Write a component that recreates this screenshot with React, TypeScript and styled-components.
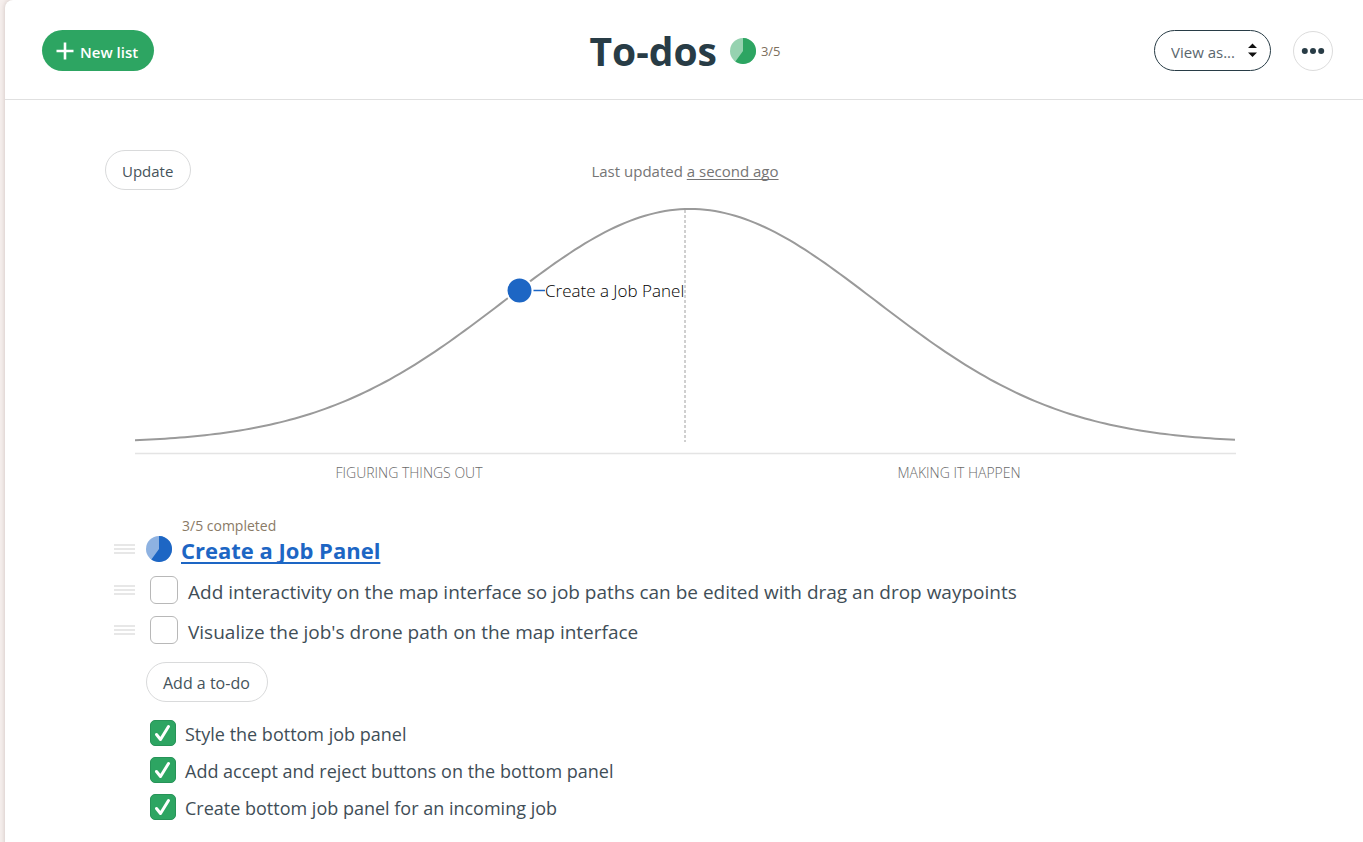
import React from "react";
import styled, { createGlobalStyle } from "styled-components";

const GlobalStyle = createGlobalStyle`
  * { box-sizing: border-box; }
  body {
    margin: 0;
    background: #f6efed;
    color: #283c46;
    font-family: "Open Sans", "Noto Sans", sans-serif;
    font-size: 15px;
  }
  button, select, input { font: inherit; color: inherit; margin: 0; }
`;

const Sheet = styled.div`
  min-height: 100vh;
  margin-left: 5px;
  background: #fff;
  border-top-left-radius: 8px;
  box-shadow: 0 0 5px rgba(90, 60, 50, 0.25);
`;

const Header = styled.header`
  display: grid;
  grid-template-columns: 1fr auto 1fr;
  align-items: center;
  height: 100px;
  padding: 2px 30px 0 32px;
  border-bottom: 1px solid #e0e0e0;
`;

const PrimaryButton = styled.button`
  display: flex;
  align-items: center;
  justify-self: start;
  gap: 6px;
  height: 41px;
  margin-left: 5px;
  padding: 2px 16px 0 14px;
  border: 0;
  border-radius: 21px;
  background: #2da562;
  color: #fff;
  font-weight: 600;
  cursor: pointer;

  svg { margin-top: -2px; }
`;

const TitleGroup = styled.div`
  display: flex;
  align-items: center;
  gap: 13px;
`;

const Title = styled.h1`
  margin: 0;
  font-size: 39px;
  line-height: 52px;
  font-weight: 700;
`;

const Progress = styled.span`
  display: flex;
  align-items: center;
  gap: 5px;
  color: #7d6f5c;
  font-size: 13px;
`;

const Actions = styled.div`
  display: flex;
  align-items: center;
  justify-self: end;
  gap: 22px;
`;

const SelectBox = styled.div`
  position: relative;

  svg {
    position: absolute;
    right: 13px;
    top: 13px;
    pointer-events: none;
  }
`;

const Select = styled.select`
  appearance: none;
  display: block;
  width: 117px;
  height: 41px;
  padding: 2px 32px 0 16px;
  border: 1px solid #283c46;
  border-radius: 21px;
  background: #fff;
  color: #5a666d;
  cursor: pointer;
`;

const MenuButton = styled.button`
  display: grid;
  place-items: center;
  width: 40px;
  height: 40px;
  padding: 0;
  border: 1px solid #dcdcdc;
  border-radius: 50%;
  background: #fff;
  cursor: pointer;
`;

const Main = styled.main`
  padding: 50px 98px 20px 100px;
`;

const ChartHeader = styled.div`
  display: grid;
  grid-template-columns: 1fr auto 1fr;
  align-items: center;
`;

const PillButton = styled.button<{ $large?: boolean }>`
  justify-self: start;
  height: 40px;
  padding: 2px 17px 0 16px;
  border: 1px solid #d9dadb;
  border-radius: 20px;
  background: #fff;
  color: #45535b;
  font-size: ${(p) => (p.$large ? 16 : 15)}px;
  cursor: pointer;
`;

const Updated = styled.p`
  margin: 0;
  padding-top: 2px;
  color: #757575;

  a {
    color: inherit;
    text-underline-offset: 2px;
    text-decoration-skip-ink: none;
  }
`;

const Chart = styled.svg`
  display: block;
  width: calc(100% - 59px);
  margin-left: 30px;
`;

const List = styled.section`
  padding: 26px 0 0 9px;
`;

const Completed = styled.p`
  margin: 0 0 0 68px;
  color: #8a7a66;
  font-size: 14px;
  line-height: 20px;
`;

const ListHeading = styled.div`
  display: flex;
  align-items: center;
  gap: 11px;
  height: 26px;
`;

const ListTitle = styled.h2`
  margin: 0 0 0 -2px;
  padding-top: 2px;
  font-size: 22px;
  line-height: 28px;
  font-weight: 700;

  a {
    color: #1d66c4;
    text-decoration-thickness: 2px;
    text-underline-offset: 3px;
    text-decoration-skip-ink: none;
  }
`;

const Items = styled.ul<{ $done?: boolean }>`
  margin: ${(p) => (p.$done ? "12px 0 0 36px" : "8px 0 0")};
  padding: 0;
  list-style: none;
`;

const Item = styled.li<{ $done?: boolean }>`
  display: flex;
  align-items: center;
  gap: 15px;
  height: ${(p) => (p.$done ? 37 : 40)}px;
`;

const ItemLabel = styled.label<{ $done?: boolean }>`
  display: flex;
  align-items: center;
  gap: ${(p) => (p.$done ? 9 : 10)}px;
  color: #3f4e57;
  font-size: ${(p) => (p.$done ? 18 : 19)}px;
  line-height: 24px;

  span { padding-top: ${(p) => (p.$done ? 2 : 4)}px; }
`;

const CheckBox = styled.div`
  position: relative;
  display: flex;

  svg {
    position: absolute;
    inset: 0;
    pointer-events: none;
  }
`;

const Check = styled.input`
  appearance: none;
  width: 28px;
  height: 28px;
  border: 1px solid #b8b8b8;
  border-radius: 6px;
  background: #fff;

  &:checked {
    width: 26px;
    height: 26px;
    border: 1px solid #279358;
    border-radius: 5px;
    background: #2da562;
  }
`;

const AddRow = styled.div`
  display: flex;
  padding: 12px 0 0 32px;
`;

function Pie({ dark, light }: { dark: string; light: string }) {
  return (
    <svg width="26" height="26" viewBox="0 0 26 26" aria-hidden="true">
      <circle cx="13" cy="13" r="13" fill={light} />
      <path d="M13 13V0A13 13 0 1 1 5.36 23.52Z" fill={dark} />
    </svg>
  );
}

function Handle() {
  return (
    <svg width="21" height="11" viewBox="0 0 21 11" aria-hidden="true">
      <path d="M0 1h21M0 5h21M0 9h21" stroke="#cfcfcf" />
    </svg>
  );
}

// The hill is a bell curve sampled every few units along the chart.
const hillY = (x: number) => 253 - 234 * Math.exp(-((x - 555) ** 2) / (2 * 186 ** 2));
const hillPath = Array.from({ length: 221 }, (_, i) => {
  const x = i * 5;
  return `${i ? "L" : "M"}${x} ${hillY(x).toFixed(2)}`;
}).join("");

function HillChart() {
  return (
    <Chart viewBox="0 0 1101 300" role="img" aria-label="Hill chart">
      <path d="M0 263.5H1101" stroke="#e4e4e4" strokeWidth="1.5" />
      <path d="M550 20V252" stroke="#a0a0a0" strokeDasharray="3 2" />
      <path d={hillPath} fill="none" stroke="#9a9a9a" strokeWidth="2" />
      <path d="M398 100.5H410" stroke="#1d66c4" strokeWidth="1.5" />
      <circle cx="384.5" cy="100.5" r="13" fill="#1d66c4" stroke="#fff" strokeWidth="2" />
      <text x="410" y="107" fontSize="17" fontWeight="300" fill="#000">Create a Job Panel</text>
      <g fontSize="14" fontWeight="300" fill="#6a6a6a" textAnchor="middle">
        <text x="274" y="288">FIGURING THINGS OUT</text>
        <text x="824" y="288">MAKING IT HAPPEN</text>
      </g>
    </Chart>
  );
}

const openItems = [
  "Add interactivity on the map interface so job paths can be edited with drag an drop waypoints",
  "Visualize the job's drone path on the map interface",
];

const doneItems = [
  "Style the bottom job panel",
  "Add accept and reject buttons on the bottom panel",
  "Create bottom job panel for an incoming job",
];

export default function App() {
  return (
    <>
      <GlobalStyle />
      <Sheet>
        <Header>
          <PrimaryButton>
            <svg width="18" height="18" viewBox="0 0 18 18" aria-hidden="true">
              <path d="M9 0.5v17M0.5 9h17" stroke="#fff" strokeWidth="2.6" />
            </svg>
            New list
          </PrimaryButton>
          <TitleGroup>
            <Title>To-dos</Title>
            <Progress>
              <Pie dark="#2da562" light="#96d2b0" />
              3/5
            </Progress>
          </TitleGroup>
          <Actions>
            <SelectBox>
              <Select aria-label="View as">
                <option>View as...</option>
              </Select>
              <svg width="11" height="15" viewBox="0 0 11 15" aria-hidden="true">
                <path d="M1 5L5.5 0.5L10 5ZM1 9.5L5.5 14L10 9.5Z" fill="#111" />
              </svg>
            </SelectBox>
            <MenuButton aria-label="More options">
              <svg width="24" height="8" viewBox="0 0 24 8" fill="#283c46" aria-hidden="true">
                <circle cx="3.8" cy="4" r="3" />
                <circle cx="12" cy="4" r="3" />
                <circle cx="20.2" cy="4" r="3" />
              </svg>
            </MenuButton>
          </Actions>
        </Header>
        <Main>
          <ChartHeader>
            <PillButton>Update</PillButton>
            <Updated>
              Last updated <a href="#updates">a second ago</a>
            </Updated>
          </ChartHeader>
          <HillChart />
          <List>
            <Completed>3/5 completed</Completed>
            <ListHeading>
              <Handle />
              <Pie dark="#1d66c4" light="#8eb2e1" />
              <ListTitle>
                <a href="#list">Create a Job Panel</a>
              </ListTitle>
            </ListHeading>
            <Items>
              {openItems.map((text) => (
                <Item key={text}>
                  <Handle />
                  <ItemLabel>
                    <Check type="checkbox" />
                    <span>{text}</span>
                  </ItemLabel>
                </Item>
              ))}
            </Items>
            <AddRow>
              <PillButton $large>Add a to-do</PillButton>
            </AddRow>
            <Items $done>
              {doneItems.map((text) => (
                <Item key={text} $done>
                  <ItemLabel $done>
                    <CheckBox>
                      <Check type="checkbox" defaultChecked />
                      <svg width="26" height="26" viewBox="0 0 26 26" aria-hidden="true">
                        <path
                          d="M6.5 14.5L10.5 19.5L18.5 6.5"
                          fill="none"
                          stroke="#fff"
                          strokeWidth="3"
                          strokeLinecap="round"
                          strokeLinejoin="round"
                        />
                      </svg>
                    </CheckBox>
                    <span>{text}</span>
                  </ItemLabel>
                </Item>
              ))}
            </Items>
          </List>
        </Main>
      </Sheet>
    </>
  );
}
